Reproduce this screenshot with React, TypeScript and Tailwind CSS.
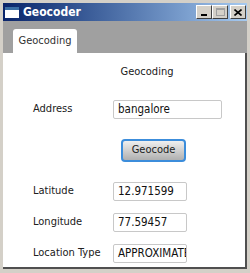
import React from "react";

const font = {
  fontFamily: '"DejaVu Sans Condensed", "DejaVu Sans", "Liberation Sans", sans-serif',
  fontStretch: "condensed" as const,
};

function Field({ label, value, w }: { label: string; value: string; w: string }) {
  return (
    <div className="flex items-center h-[19px]">
      <div className="w-[80px] text-[11px] text-[#202020] whitespace-nowrap">{label}</div>
      <div className={`${w} h-[19px] border border-[#c8c8c8] rounded-[2px] bg-white text-[11.5px] text-[#101010] px-[4px] leading-[17px] overflow-hidden whitespace-nowrap`}>
        {value}
      </div>
    </div>
  );
}

export default function App() {
  return (
    <div className="w-[250px] h-[273px] bg-[#d4d0c8] flex flex-col p-[3px] pb-[4px] overflow-hidden" style={font}>
      {/* title bar */}
      <div className="h-[18px] flex items-center bg-gradient-to-r from-[#0a246a] to-[#a6caf0] pl-[2px] pr-[1px] shrink-0">
        <div className="w-[14px] h-[11px] bg-white border-t-[3px] border-[#3a6ea5] mr-[4px]" />
        <div className="text-white font-bold text-[12px] leading-none flex-1">Geocoder</div>
        <div className="flex items-center gap-0">
          <div className="w-[16px] h-[14px] bg-[#d4d0c8] border border-t-white border-l-white border-r-[#404040] border-b-[#404040] flex items-end justify-center pb-[2px]">
            <div className="w-[6px] h-[2px] bg-black" />
          </div>
          <div className="w-[16px] h-[14px] bg-[#d4d0c8] border border-t-white border-l-white border-r-[#404040] border-b-[#404040] flex items-center justify-center">
            <div className="w-[9px] h-[8px] border border-[#a0a0a0] border-t-2" />
          </div>
          <div className="w-[16px] h-[14px] ml-[2px] bg-[#d4d0c8] border border-t-white border-l-white border-r-[#404040] border-b-[#404040] flex items-center justify-center">
            <svg width="8" height="7" viewBox="0 0 8 7">
              <path d="M0.5 0.5 L7.5 6.5 M7.5 0.5 L0.5 6.5" stroke="black" strokeWidth="1.6" />
            </svg>
          </div>
        </div>
      </div>
      {/* tab area */}
      <div className="flex-1 flex flex-col bg-[#a0a0a0]">
        <div className="h-[32px] flex items-end pl-[10px] shrink-0">
          <div className="h-[24px] w-[64px] bg-white rounded-t-[3px] flex items-center justify-center text-[11px] text-[#303030]">
            Geocoding
          </div>
        </div>
        <div className="flex-1 bg-white border-r-[2px] border-b-[2px] border-[#505050] flex flex-col">
          <div className="text-[11px] text-[#202020] text-center pl-[46px] mt-[12px] h-[14px] leading-[14px]">Geocoding</div>
          <div className="pl-[30px] mt-[21px]">
            <Field label="Address" value="bangalore" w="w-[109px]" />
          </div>
          <div className="pl-[118px] mt-[20px]">
            <div className="w-[65px] h-[23px] rounded-[4px] border-[2px] border-[#3c8ddb] bg-gradient-to-b from-[#f0f0f0] to-[#b0b0b0] flex items-center justify-center text-[11px] text-[#202020]">
              Geocode
            </div>
          </div>
          <div className="pl-[30px] mt-[20px] flex flex-col gap-[12px]">
            <Field label="Latitude" value="12.971599" w="w-[74px]" />
            <Field label="Longitude" value="77.59457" w="w-[74px]" />
            <Field label="Location Type" value="APPROXIMATE" w="w-[74px]" />
          </div>
        </div>
      </div>
    </div>
  );
}
